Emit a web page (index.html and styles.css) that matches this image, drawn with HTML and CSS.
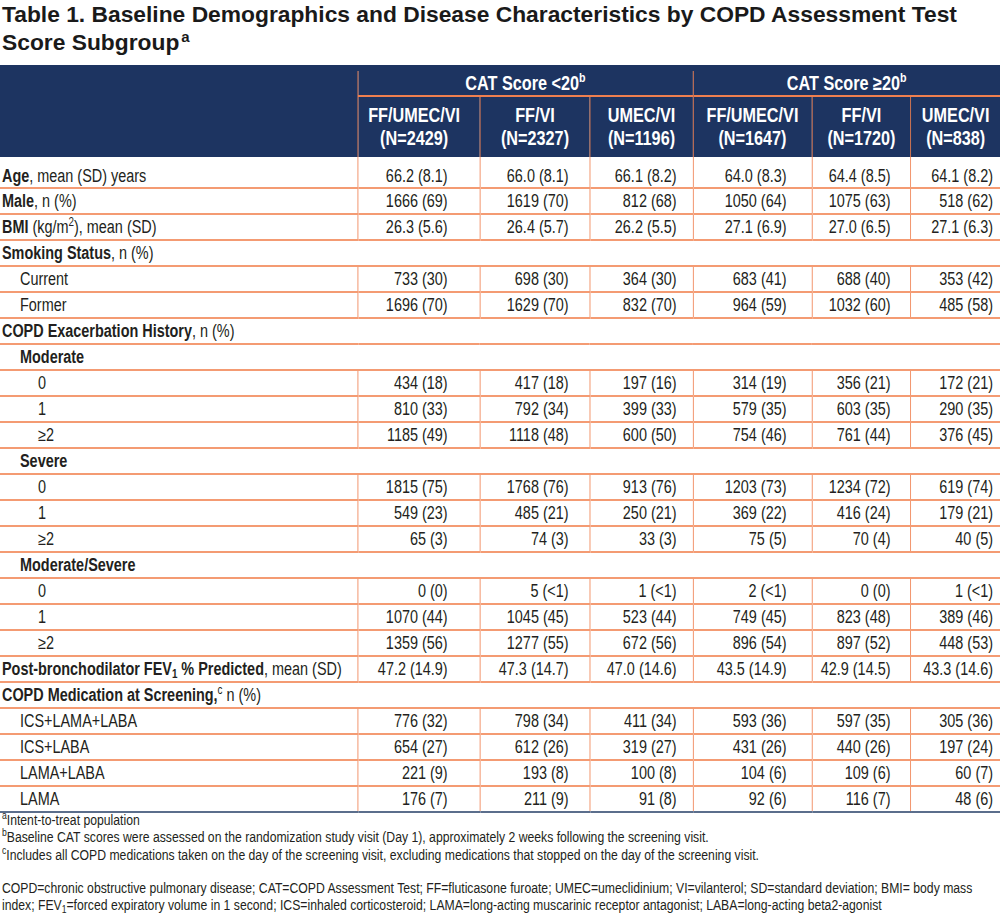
FILE: index.html
```html
<!DOCTYPE html>
<html lang="en">
<head>
<meta charset="utf-8">
<title>Table 1. Baseline Demographics</title>
<link rel="stylesheet" href="styles.css">
</head>
<body>
<h1 class="title">Table 1. Baseline Demographics and Disease Characteristics by COPD Assessment Test Score Subgroup<sup>a</sup></h1>
<div class="frame">
<div class="narrow">
<div class="band"></div>
<table class="tbl">
  <colgroup>
    <col class="w-label"><col class="w-c1"><col class="w-c2"><col class="w-c3"><col class="w-c4"><col class="w-c5"><col class="w-c6">
  </colgroup>
  <thead>
    <tr class="h1">
      <th rowspan="2" class="blank"></th>
      <th colspan="3" class="grp">CAT Score &lt;20<sup>b</sup></th>
      <th colspan="3" class="grp">CAT Score ≥20<sup>b</sup></th>
    </tr>
    <tr class="h2">
      <th class="sub first-sub">FF/UMEC/VI<br>(N=2429)</th>
      <th class="sub">FF/VI<br>(N=2327)</th>
      <th class="sub">UMEC/VI<br>(N=1196)</th>
      <th class="sub">FF/UMEC/VI<br>(N=1647)</th>
      <th class="sub">FF/VI<br>(N=1720)</th>
      <th class="sub">UMEC/VI<br>(N=838)</th>
    </tr>
  </thead>
  <tbody>
    <tr class="first"><td class="lbl"><b>Age</b>, mean (SD) years</td><td class="n p1">66.2 (8.1)</td><td class="n p2">66.0 (8.1)</td><td class="n p3">66.1 (8.2)</td><td class="n p4">64.0 (8.3)</td><td class="n p5">64.4 (8.5)</td><td class="n p6">64.1 (8.2)</td></tr>
    <tr><td class="lbl"><b>Male</b>, n (%)</td><td class="n p1">1666 (69)</td><td class="n p2">1619 (70)</td><td class="n p3">812 (68)</td><td class="n p4">1050 (64)</td><td class="n p5">1075 (63)</td><td class="n p6">518 (62)</td></tr>
    <tr><td class="lbl"><b>BMI</b> (kg/m<sup class="sm">2</sup>), mean (SD)</td><td class="n p1">26.3 (5.6)</td><td class="n p2">26.4 (5.7)</td><td class="n p3">26.2 (5.5)</td><td class="n p4">27.1 (6.9)</td><td class="n p5">27.0 (6.5)</td><td class="n p6">27.1 (6.3)</td></tr>
    <tr><td class="lbl" colspan="7"><b>Smoking Status</b>, n (%)</td></tr>
    <tr><td class="lbl l1">Current</td><td class="n p1">733 (30)</td><td class="n p2">698 (30)</td><td class="n p3">364 (30)</td><td class="n p4">683 (41)</td><td class="n p5">688 (40)</td><td class="n p6">353 (42)</td></tr>
    <tr><td class="lbl l1">Former</td><td class="n p1">1696 (70)</td><td class="n p2">1629 (70)</td><td class="n p3">832 (70)</td><td class="n p4">964 (59)</td><td class="n p5">1032 (60)</td><td class="n p6">485 (58)</td></tr>
    <tr><td class="lbl" colspan="7"><b>COPD Exacerbation History</b>, n (%)</td></tr>
    <tr><td class="lbl l1" colspan="7"><b>Moderate</b></td></tr>
    <tr><td class="lbl l2">0</td><td class="n p1">434 (18)</td><td class="n p2">417 (18)</td><td class="n p3">197 (16)</td><td class="n p4">314 (19)</td><td class="n p5">356 (21)</td><td class="n p6">172 (21)</td></tr>
    <tr><td class="lbl l2">1</td><td class="n p1">810 (33)</td><td class="n p2">792 (34)</td><td class="n p3">399 (33)</td><td class="n p4">579 (35)</td><td class="n p5">603 (35)</td><td class="n p6">290 (35)</td></tr>
    <tr><td class="lbl l2">≥2</td><td class="n p1">1185 (49)</td><td class="n p2">1118 (48)</td><td class="n p3">600 (50)</td><td class="n p4">754 (46)</td><td class="n p5">761 (44)</td><td class="n p6">376 (45)</td></tr>
    <tr><td class="lbl l1" colspan="7"><b>Severe</b></td></tr>
    <tr><td class="lbl l2">0</td><td class="n p1">1815 (75)</td><td class="n p2">1768 (76)</td><td class="n p3">913 (76)</td><td class="n p4">1203 (73)</td><td class="n p5">1234 (72)</td><td class="n p6">619 (74)</td></tr>
    <tr><td class="lbl l2">1</td><td class="n p1">549 (23)</td><td class="n p2">485 (21)</td><td class="n p3">250 (21)</td><td class="n p4">369 (22)</td><td class="n p5">416 (24)</td><td class="n p6">179 (21)</td></tr>
    <tr><td class="lbl l2">≥2</td><td class="n p1">65 (3)</td><td class="n p2">74 (3)</td><td class="n p3">33 (3)</td><td class="n p4">75 (5)</td><td class="n p5">70 (4)</td><td class="n p6">40 (5)</td></tr>
    <tr><td class="lbl l1" colspan="7"><b>Moderate/Severe</b></td></tr>
    <tr><td class="lbl l2">0</td><td class="n p1">0 (0)</td><td class="n p2">5 (&lt;1)</td><td class="n p3">1 (&lt;1)</td><td class="n p4">2 (&lt;1)</td><td class="n p5">0 (0)</td><td class="n p6">1 (&lt;1)</td></tr>
    <tr><td class="lbl l2">1</td><td class="n p1">1070 (44)</td><td class="n p2">1045 (45)</td><td class="n p3">523 (44)</td><td class="n p4">749 (45)</td><td class="n p5">823 (48)</td><td class="n p6">389 (46)</td></tr>
    <tr><td class="lbl l2">≥2</td><td class="n p1">1359 (56)</td><td class="n p2">1277 (55)</td><td class="n p3">672 (56)</td><td class="n p4">896 (54)</td><td class="n p5">897 (52)</td><td class="n p6">448 (53)</td></tr>
    <tr><td class="lbl"><b>Post-bronchodilator FEV<sub>1</sub> % Predicted</b>, mean (SD)</td><td class="n p1">47.2 (14.9)</td><td class="n p2">47.3 (14.7)</td><td class="n p3">47.0 (14.6)</td><td class="n p4">43.5 (14.9)</td><td class="n p5">42.9 (14.5)</td><td class="n p6">43.3 (14.6)</td></tr>
    <tr><td class="lbl" colspan="7"><b>COPD Medication at Screening,</b><sup class="sm">c</sup> n (%)</td></tr>
    <tr><td class="lbl l1">ICS+LAMA+LABA</td><td class="n p1">776 (32)</td><td class="n p2">798 (34)</td><td class="n p3">411 (34)</td><td class="n p4">593 (36)</td><td class="n p5">597 (35)</td><td class="n p6">305 (36)</td></tr>
    <tr><td class="lbl l1">ICS+LABA</td><td class="n p1">654 (27)</td><td class="n p2">612 (26)</td><td class="n p3">319 (27)</td><td class="n p4">431 (26)</td><td class="n p5">440 (26)</td><td class="n p6">197 (24)</td></tr>
    <tr><td class="lbl l1">LAMA+LABA</td><td class="n p1">221 (9)</td><td class="n p2">193 (8)</td><td class="n p3">100 (8)</td><td class="n p4">104 (6)</td><td class="n p5">109 (6)</td><td class="n p6">60 (7)</td></tr>
    <tr class="last"><td class="lbl l1">LAMA</td><td class="n p1">176 (7)</td><td class="n p2">211 (9)</td><td class="n p3">91 (8)</td><td class="n p4">92 (6)</td><td class="n p5">116 (7)</td><td class="n p6">48 (6)</td></tr>
  </tbody>
</table>
<div class="notes">
  <p><sup>a</sup>Intent-to-treat population</p>
  <p><sup>b</sup>Baseline CAT scores were assessed on the randomization study visit (Day 1), approximately 2 weeks following the screening visit.</p>
  <p><sup>c</sup>Includes all COPD medications taken on the day of the screening visit, excluding medications that stopped on the day of the screening visit.</p>
  <p class="abbr">COPD=chronic obstructive pulmonary disease; CAT=COPD Assessment Test; FF=fluticasone furoate; UMEC=umeclidinium; VI=vilanterol; SD=standard deviation; BMI= body mass<br>index; FEV<sub>1</sub>=forced expiratory volume in 1 second; ICS=inhaled corticosteroid; LAMA=long-acting muscarinic receptor antagonist; LABA=long-acting beta2-agonist</p>
</div>
</div>
</div>
</body>
</html>
```

FILE: styles.css
```css
html {
  overflow: hidden;
}
html, body {
  margin: 0;
  padding: 0;
  background: #ffffff;
}
body {
  width: 1000px;
  font-family: "Liberation Sans", Arial, sans-serif;
  color: #231f20;
}
.title {
  margin: 0 0 9px 2px;
  font-size: 22.8px;
  line-height: 28px;
  font-weight: bold;
  color: #1a1a1a;
}
.title sup {
  font-size: 15px;
  line-height: 0;
  vertical-align: 8px;
  margin-left: 2px;
}
.frame {
  width: 1000px;
  overflow: hidden;
}
/* emulate Arial Narrow: lay out at 1/0.82 width, then compress horizontally */
.narrow {
  width: 1219.5px;
  transform: scaleX(0.82);
  transform-origin: 0 0;
}
.band {
  height: 6px;
  background: #1d3461;
}
.tbl {
  width: 1219.5px;
  border-collapse: collapse;
  table-layout: fixed;
  font-size: 17.6px;
}
.w-label { width: 436.6px; }
.w-c1 { width: 148.8px; }
.w-c2 { width: 134.1px; }
.w-c3 { width: 125.6px; }
.w-c4 { width: 145.1px; }
.w-c5 { width: 120.7px; }
.w-c6 { width: 108.6px; }

.tbl th {
  background: #1d3461;
  color: #ffffff;
  font-weight: bold;
  font-size: 19.8px;
  padding: 0;
  text-align: center;
}
.tbl th sup {
  font-size: 13px;
  line-height: 0;
  vertical-align: 8px;
}
.h1 th {
  height: 24px;
  line-height: 22px;
}
.h1 .grp {
  border-left: 1px solid #ef7f4f;
  border-bottom: 2px solid #ef7f4f;
}
.h2 th {
  height: 60px;
  line-height: 23px;
}
.h2 .sub {
  border-left: 1px solid #ef7f4f;
}
.h2 .first-sub {
  padding-right: 12px;
}
.tbl td {
  height: 24px;
  line-height: 24px;
  padding: 0;
  white-space: nowrap;
  border-bottom: 2px solid #f49b73;
}
.tbl tr.first td {
  height: 22px;
  line-height: 22px;
  padding-top: 8px;
}
.tbl tr.last td {
  border-bottom: 2px solid #5b6e8c;
}
.lbl {
  padding-left: 2.4px !important;
  text-align: left;
}
.lbl.l1 { padding-left: 24.4px !important; }
.lbl.l2 { padding-left: 46.3px !important; }
.lbl sup.sm {
  font-size: 12px;
  line-height: 0;
  vertical-align: 7px;
}
.lbl sub {
  font-size: 12px;
  line-height: 0;
  vertical-align: -3px;
}
.n {
  text-align: right;
  border-left: 1px solid #ef7f4f;
}
.p1 { padding-right: 39px !important; }
.p2 { padding-right: 25.6px !important; }
.p3 { padding-right: 19.5px !important; }
.p4 { padding-right: 30.5px !important; }
.p5 { padding-right: 24.4px !important; }
.p6 { padding-right: 8.5px !important; }

.notes {
  margin: -1px 0 0 2.4px;
  font-size: 14.9px;
  line-height: 17.3px;
  color: #231f20;
}
.notes p {
  margin: 0;
  white-space: nowrap;
}
.notes sup {
  font-size: 10.5px;
  line-height: 0;
  vertical-align: 6px;
}
.notes sub {
  font-size: 10.5px;
  line-height: 0;
  vertical-align: -3px;
}
.notes .abbr {
  margin-top: 16px;
}
```
